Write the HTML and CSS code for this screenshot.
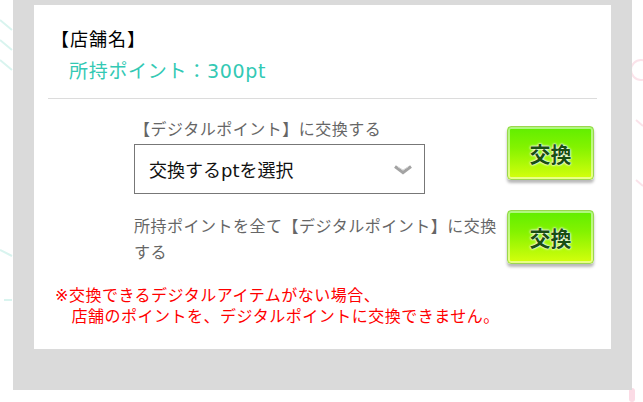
FILE: index.html
```html
<!DOCTYPE html>
<html lang="ja">
<head>
<meta charset="utf-8">
<title>交換</title>
<link rel="stylesheet" href="styles.css">
</head>
<body>
<svg class="deco" width="643" height="402" viewBox="0 0 643 402" aria-hidden="true">
  <g fill="none" stroke="#d9f4ef" stroke-width="2">
    <path d="M0 20 L12 30 M0 40 L12 50 M0 60 L12 70"/>
    <path d="M0 250 L12 256 M4 300 L12 300"/>
  </g>
  <g fill="none" stroke="#fbe3ea" stroke-width="2">
    <circle cx="641" cy="70" r="10"/>
    <path d="M636 120 L643 126 M636 180 L643 186"/>
  </g>
  <g fill="#fbdbe5">
    <rect x="629" y="388" width="6" height="14" rx="3"/>
  </g>
</svg>
<div class="panel">
  <div class="card">
    <div class="shop">【店舗名】</div>
    <div class="points">所持ポイント：300pt</div>
    <hr class="divider">
    <div class="row row-select">
      <div class="col">
        <div class="label">【デジタルポイント】に交換する</div>
        <div class="select">
          <span>交換するptを選択</span>
          <svg class="chev" width="18" height="10" viewBox="0 0 18 10"><path d="M1 1.5 L9 7.5 L17 1.5" fill="none" stroke="#a3a3a3" stroke-width="3"/><path d="M4 2 L9 5 L14 2" fill="none" stroke="#d5d5d5" stroke-width="1"/></svg>
        </div>
      </div>
      <button class="btn">交換</button>
    </div>
    <div class="row row-all">
      <div class="col">
        <div class="label all-text">所持ポイントを全て【デジタルポイント】に交換する</div>
      </div>
      <button class="btn">交換</button>
    </div>
    <div class="note">※交換できるデジタルアイテムがない場合、<br>　店舗のポイントを、デジタルポイントに交換できません。</div>
  </div>
</div>
</body>
</html>
```

FILE: styles.css
```css
* { box-sizing: border-box; }
html, body { margin: 0; padding: 0; }
body {
  width: 643px;
  height: 402px;
  background: #fff;
  font-family: "DejaVu Sans", "Noto Sans CJK JP", sans-serif;
  position: relative;
  overflow: hidden;
}
.deco { position: absolute; left: 0; top: 0; }
.panel {
  position: relative;
  margin-left: 13px;
  width: 619px;
  height: 390px;
  background: #dadada;
  padding: 5px 21px 0 21px;
}
.card {
  background: #fff;
  width: 577px;
  height: 344px;
  padding-top: 24px;
}
.shop {
  font-size: 18px;
  line-height: 22px;
  letter-spacing: 1px;
  color: #000;
  padding-left: 17px;
}
.points {
  font-size: 19px;
  line-height: 24px;
  color: #33c9b4;
  padding-left: 35px;
  margin-top: 8px;
  letter-spacing: 0.7px;
}
.divider {
  border: 0;
  border-top: 1px solid #dcdcdc;
  margin: 15px 14px 0 14px;
  height: 0;
}
.row {
  display: flex;
  align-items: flex-start;
  padding-left: 100px;
  padding-right: 17px;
  gap: 7px;
}
.col { flex: 1; }
.row-select { margin-top: 18px; }
.label {
  font-size: 16px;
  line-height: 26px;
  letter-spacing: 0.5px;
  color: #666;
}
.select {
  margin-top: 1px;
  width: 291px;
  height: 50px;
  border: 1px solid #777;
  display: flex;
  align-items: center;
  justify-content: space-between;
  padding: 0 12px 0 14px;
  font-size: 18px;
  color: #111;
}
.chev { margin-top: 2px; }
.btn {
  flex: none;
  width: 87px;
  height: 54px;
  margin-top: 9px;
  border: 1px solid #9ad84e;
  border-radius: 4px;
  background: linear-gradient(#5fee00 0%, #84f300 40%, #d6ff0c 100%);
  box-shadow: inset 0 0 0 2px rgba(255,255,255,0.5), 0 3px 3px rgba(0,0,0,0.28);
  font-family: "Noto Sans CJK JP", sans-serif;
  font-weight: 700;
  font-size: 21px;
  color: #1a4f12;
  text-shadow: 0 0 3px #fff, 0 0 2px #fff, 0 0 1px #fff;
  padding: 0;
  line-height: 1;
}
.row-all { margin-top: 16px; }
.all-text { margin-top: 4px; }
.row-all .btn { margin-top: 0; }
.note {
  margin-top: 19px;
  padding-left: 21px;
  font-size: 16px;
  line-height: 21px;
  letter-spacing: 0.5px;
  color: #ff0000;
}
```
